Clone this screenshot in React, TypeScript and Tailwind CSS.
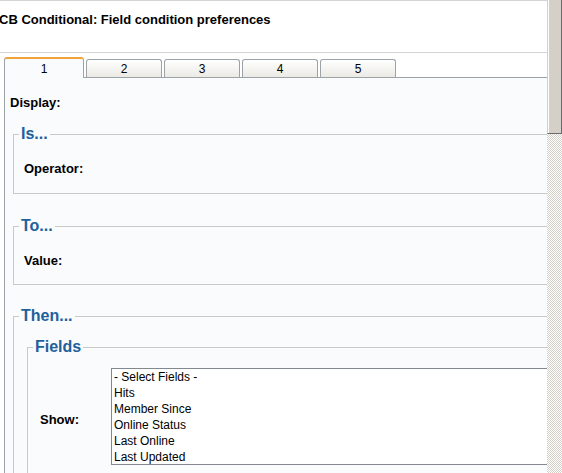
import type { ReactNode } from "react";

const FIELDS = [
  "- Select Fields -",
  "Hits",
  "Member Since",
  "Online Status",
  "Last Online",
  "Last Updated",
];

function Group({
  title,
  className = "",
  children,
}: {
  title: string;
  className?: string;
  children: ReactNode;
}) {
  return (
    <fieldset className={`border border-[#c9c9c9] ${className}`}>
      <legend className="ml-[5px] px-[2px] text-[16px] leading-[18px] font-bold text-[#21609b]">
        {title}
      </legend>
      {children}
    </fieldset>
  );
}

function Tab({ label, active }: { label: string; active?: boolean }) {
  if (active) {
    return (
      <div className="relative z-10 -mb-px flex h-[21px] w-[80px] items-center justify-center rounded-t-[3px] border-x border-t-2 border-x-[#9ca3a8] border-t-[#f0a33a] bg-[#fafbfd]">
        {label}
      </div>
    );
  }
  return (
    <div className="ml-[2px] flex h-[18px] w-[76px] items-center justify-center rounded-t-[3px] border-x border-t border-[#9ca3a8] bg-linear-to-b from-white to-[#ebeae4]">
      {label}
    </div>
  );
}

export default function App() {
  return (
    <div className="flex h-[473px] w-[562px] overflow-hidden bg-white font-['Liberation_Sans',Arial,sans-serif] text-[12px] text-black">
      <div className="w-[547px] shrink-0 overflow-hidden border-t border-[#d4d4d4]">
        <div className="h-[52px] border-b border-[#d4d4d4] pt-[11px]">
          <h1 className="-ml-px text-[13px] leading-[16px] font-bold">
            CB Conditional: Field condition preferences
          </h1>
        </div>

        <div className="flex items-end pt-[4px] pl-[4px]">
          <Tab label="1" active />
          <Tab label="2" />
          <Tab label="3" />
          <Tab label="4" />
          <Tab label="5" />
        </div>

        <div className="ml-[4px] w-[640px] border-t border-l border-[#9ca3a8] bg-[#fafbfd] pt-[17px] pb-[40px] pl-[5px]">
          <div className="text-[13px] leading-[16px] font-bold">Display:</div>

          <Group title="Is..." className="mt-[14px] ml-[3px]">
            <div className="pt-[18px] pb-[16px] pl-[10px] text-[13px] leading-[16px] font-bold">
              Operator:
            </div>
          </Group>

          <Group title="To..." className="mt-[23px] ml-[3px]">
            <div className="pt-[18px] pb-[15px] pl-[10px] text-[13px] leading-[16px] font-bold">
              Value:
            </div>
          </Group>

          <Group title="Then..." className="mt-[22px] ml-[3px]">
            <Group title="Fields" className="mt-[13px] ml-[13px]">
              <div className="flex items-start pt-[12px] pb-[20px] pl-[12px]">
                <div className="mt-[44px] w-[71px] shrink-0 text-[13px] leading-[16px] font-bold">
                  Show:
                </div>
                <div className="h-[97px] w-[460px] overflow-hidden border border-[#828790] bg-white pl-[2px]">
                  {FIELDS.map((f) => (
                    <div key={f} className="leading-[16px] whitespace-nowrap">
                      {f}
                    </div>
                  ))}
                </div>
              </div>
            </Group>
          </Group>
        </div>
      </div>

      <div className="flex w-[15px] shrink-0 flex-col">
        <div className="h-[134px] border-r border-b border-l border-r-[#6b6b6b] border-b-[#6b6b6b] border-l-[#cfcfcf] bg-[#d4d0c8] shadow-[inset_1px_0_0_#ffffff]" />
        <div className="flex-1 bg-[repeating-conic-gradient(#d4d0c8_0%_25%,#ffffff_0%_50%)] bg-[length:2px_2px]" />
      </div>
    </div>
  );
}
